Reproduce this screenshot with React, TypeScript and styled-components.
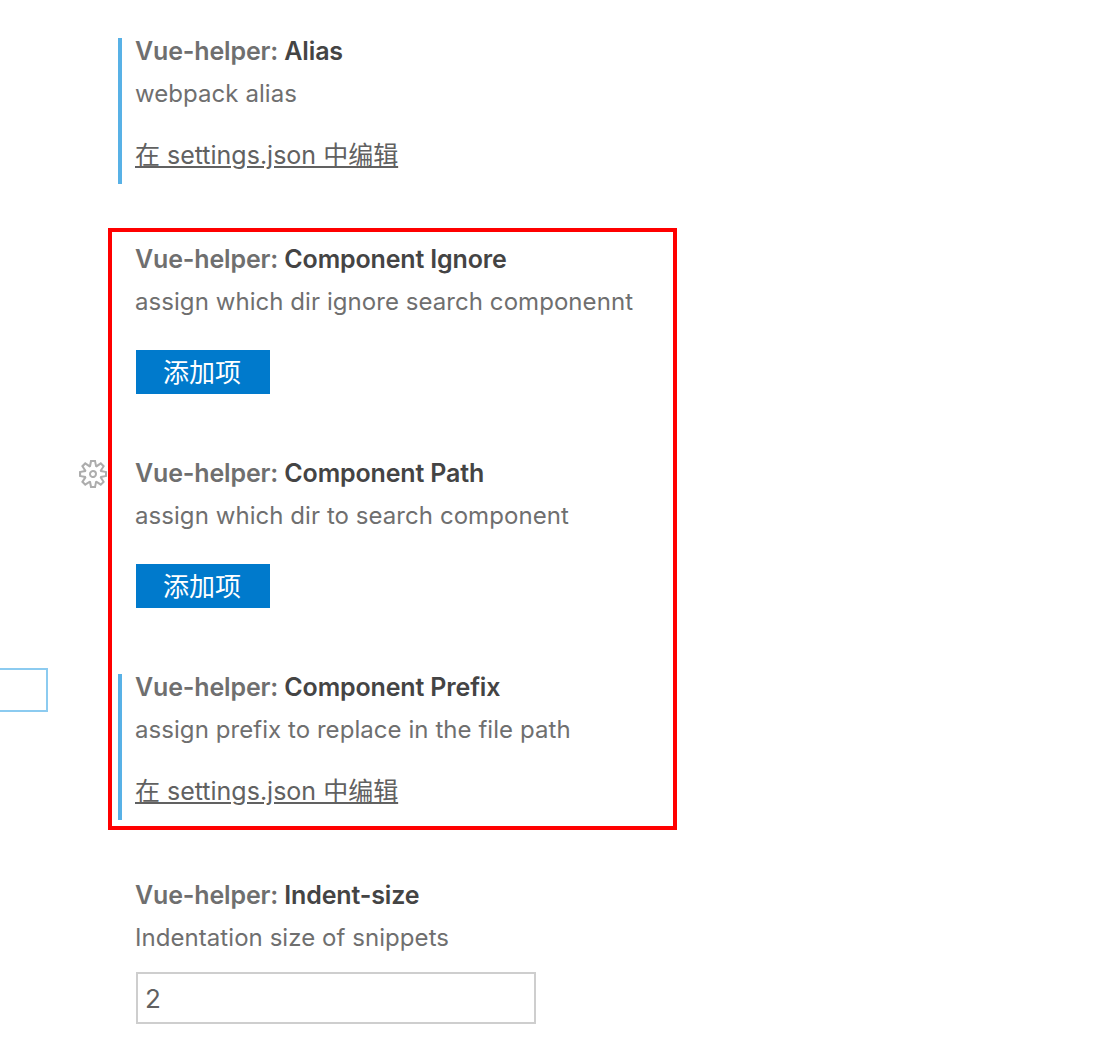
import styled, { createGlobalStyle } from 'styled-components';
import { VscSettingsGear } from 'react-icons/vsc';

const GlobalStyle = createGlobalStyle`
  html, body {
    margin: 0;
    padding: 0;
    background: #fff;
    overflow: hidden;
  }
`;

const Page = styled.div`
  position: relative;
  height: 1058px;
  box-sizing: border-box;
  padding: 38px 0 0 118px;
  font-family: Inter, "Noto Sans CJK SC", sans-serif;
  font-size: 25px;
  color: #6f6f6f;
`;

interface SettingProps {
  modified?: boolean;
}

const Setting = styled.div<SettingProps>`
  position: relative;
  display: flex;
  flex-direction: column;
  align-items: flex-start;
  box-sizing: border-box;
  padding-left: 14px;
  padding-bottom: ${(props) => (props.modified ? '16px' : '0')};
  border-left: 4px solid ${(props) => (props.modified ? '#58b1e6' : 'transparent')};
`;

const Title = styled.div`
  margin-left: -1px;
  line-height: 26px;
  font-weight: 600;
  letter-spacing: -0.15px;
  color: #6f6f6f;

  strong {
    font-weight: 600;
    color: #444;
  }
`;

const Description = styled.div`
  margin-top: 17px;
  margin-left: -1px;
  line-height: 25px;
  font-size: 24px;
  letter-spacing: 0.06px;
`;

const EditLink = styled.a`
  margin-top: 36px;
  margin-left: -1px;
  line-height: 26px;
  color: #616161;
  text-decoration: underline;
`;

const AddButton = styled.button`
  margin-top: 36px;
  width: 134px;
  height: 44px;
  padding: 0 2px 4px 0;
  border: none;
  background: #007acc;
  color: #fff;
  font-family: inherit;
  font-size: 26px;
`;

const Highlight = styled.div`
  display: flex;
  flex-direction: column;
  gap: 66px;
  box-sizing: border-box;
  width: 569px;
  margin: 44px 0 52px -10px;
  padding: 14px 0 6px 6px;
  border: 4px solid #f00;
`;

const Gear = styled.span`
  position: absolute;
  left: -43px;
  top: 0;
  display: flex;
  color: #adadad;

  svg {
    width: 28px;
    height: 28px;
  }
`;

const ClippedInput = styled.div`
  position: absolute;
  left: -204px;
  top: -6px;
  box-sizing: border-box;
  width: 130px;
  height: 44px;
  border: 2px solid #8ccbf0;
`;

const ValueInput = styled.input`
  display: block;
  box-sizing: border-box;
  width: 400px;
  height: 52px;
  margin-top: 22px;
  padding: 0 8px 0 7px;
  border: 2px solid #cecece;
  outline: none;
  color: #616161;
  font-family: inherit;
  font-size: 26px;
`;

const App = () => {
  return (
    <Page>
      <GlobalStyle />
      <Setting modified>
        <Title>
          Vue-helper: <strong>Alias</strong>
        </Title>
        <Description>webpack alias</Description>
        <EditLink>在 settings.json 中编辑</EditLink>
      </Setting>
      <Highlight>
        <Setting>
          <Title>
            Vue-helper: <strong>Component Ignore</strong>
          </Title>
          <Description>assign which dir ignore search componennt</Description>
          <AddButton>添加项</AddButton>
        </Setting>
        <Setting>
          <Gear>
            <VscSettingsGear />
          </Gear>
          <Title>
            Vue-helper: <strong>Component Path</strong>
          </Title>
          <Description>assign which dir to search component</Description>
          <AddButton>添加项</AddButton>
        </Setting>
        <Setting modified>
          <ClippedInput />
          <Title>
            Vue-helper: <strong>Component Prefix</strong>
          </Title>
          <Description>assign prefix to replace in the file path</Description>
          <EditLink>在 settings.json 中编辑</EditLink>
        </Setting>
      </Highlight>
      <Setting>
        <Title>
          Vue-helper: <strong>Indent-size</strong>
        </Title>
        <Description>Indentation size of snippets</Description>
        <ValueInput defaultValue="2" />
      </Setting>
    </Page>
  );
};

export default App;
